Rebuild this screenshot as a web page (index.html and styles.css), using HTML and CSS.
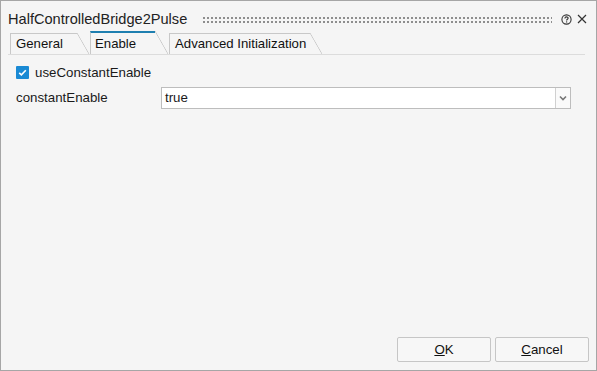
FILE: index.html
```html
<!DOCTYPE html>
<html>
<head>
<meta charset="utf-8">
<link rel="stylesheet" href="styles.css">
</head>
<body>
<div class="window">
  <div class="titlebar">
    <span class="title">HalfControlledBridge2Pulse</span>
    <span class="grip"></span>
    <span class="help">
      <svg width="11" height="11" viewBox="0 0 11 11"><circle cx="5.5" cy="5.5" r="4.6" fill="none" stroke="#333" stroke-width="1.1"/><path d="M3.9 4.4 C3.9 3.4 4.6 2.9 5.5 2.9 C6.4 2.9 7.1 3.4 7.1 4.2 C7.1 5.2 5.6 5.3 5.6 6.4" fill="none" stroke="#333" stroke-width="1.1"/><circle cx="5.6" cy="7.9" r="0.7" fill="#333"/></svg>
    </span>
    <span class="close">
      <svg width="10" height="10" viewBox="0 0 10 10"><path d="M1 1 L9 9 M9 1 L1 9" stroke="#333" stroke-width="1.2"/></svg>
    </span>
  </div>
  <div class="tabs">
    <div class="tab tab-general">General</div>
    <div class="tab tab-enable selected">Enable</div>
    <div class="tab tab-adv">Advanced Initialization</div>
  </div>
  <div class="content">
    <div class="row check-row">
      <span class="checkbox">
        <svg width="13" height="13" viewBox="0 0 13 13"><rect width="13" height="13" rx="1" fill="#1a8ad4"/><path d="M3.2 6.8 L5.4 8.9 L9.8 4.3" fill="none" stroke="#fff" stroke-width="1.6"/></svg>
      </span>
      <span class="label">useConstantEnable</span>
    </div>
    <div class="row field-row">
      <span class="field-label">constantEnable</span>
      <div class="combo">
        <span class="combo-value">true</span>
        <span class="combo-btn">
          <svg width="8" height="6" viewBox="0 0 8 6"><path d="M1 1.5 L4 4.5 L7 1.5" fill="none" stroke="#777" stroke-width="1.6"/></svg>
        </span>
      </div>
    </div>
  </div>
  <div class="footer">
    <button class="btn"><u>O</u>K</button>
    <button class="btn"><u>C</u>ancel</button>
  </div>
</div>
</body>
</html>
```

FILE: styles.css
```css
html, body {
  margin: 0;
  padding: 0;
  background: #f5f5f5;
}
.window {
  width: 597px;
  height: 371px;
  box-sizing: border-box;
  border: 1px solid #a6a6a6;
  background: #f5f5f5;
  display: flex;
  flex-direction: column;
  font-family: "Liberation Sans", Arial, sans-serif;
  color: #1a1a1a;
}
.titlebar {
  display: flex;
  align-items: center;
  height: 30px;
  padding: 0 0 0 7px;
  box-sizing: border-box;
}
.title {
  font-size: 14.6px;
  color: #222;
  padding-top: 6px;
}
.grip {
  flex: 1;
  height: 7px;
  margin: 6px 9px 0 15px;
  background-image: radial-gradient(circle, #8e8e8e 0.9px, transparent 1.2px);
  background-size: 4px 4px;
  background-position: 0 0;
}
.help {
  display: flex;
  margin-top: 6px;
  margin-right: 5px;
}
.close {
  display: flex;
  margin-top: 6px;
  margin-right: 9px;
}
.tabs {
  display: flex;
  align-items: flex-end;
  height: 24px;
  margin: 0 11px 0 7px;
  border-bottom: 1px solid #dcdcdc;
  box-sizing: border-box;
}
.tab {
  position: relative;
  height: 21px;
  box-sizing: border-box;
  border-left: 1px solid #c8c8c8;
  border-top: 1px solid #c8c8c8;
  font-size: 13.2px;
  line-height: 20px;
  padding: 0 0 0 5px;
  color: #111;
}
.tab::after {
  content: "";
  position: absolute;
  top: -1px;
  right: -12px;
  width: 12px;
  height: 21px;
  background: linear-gradient(to top right, transparent calc(50% - 0.7px), #c8c8c8 50%, transparent calc(50% + 0.7px));
}
.tab-general {
  width: 67px;
  margin-left: 2px;
}
.tab-enable {
  width: 65px;
  margin-left: 13px;
  height: 23px;
  line-height: 22px;
  border-top: 2px solid #1e7fb0;
  padding-left: 4px;
}
.tab-enable::after {
  top: -2px;
  height: 23px;
  right: -13px;
  width: 13px;
}
.tab-adv {
  width: 141px;
  margin-left: 14px;
}
.content {
  flex: 1;
  padding: 9px 0 0 15px;
}
.row {
  display: flex;
  align-items: center;
}
.check-row {
  height: 16px;
}
.checkbox {
  display: flex;
  width: 13px;
  height: 13px;
}
.label {
  font-size: 13.3px;
  margin-left: 6px;
}
.field-row {
  margin-top: 7px;
}
.field-label {
  font-size: 13.3px;
  width: 145px;
  margin-top: -1px;
}
.combo {
  display: flex;
  width: 410px;
  height: 22px;
  box-sizing: border-box;
  border: 1px solid #bdbdbd;
  background: #fff;
}
.combo-value {
  flex: 1;
  font-size: 13.3px;
  line-height: 20px;
  padding-left: 3px;
}
.combo-btn {
  width: 14px;
  border-left: 1px solid #d0d0d0;
  display: flex;
  align-items: center;
  justify-content: center;
  background: #fafafa;
}
.footer {
  display: flex;
  justify-content: flex-end;
  gap: 4px;
  padding: 0 7px 8px 0;
}
.btn {
  width: 94px;
  height: 25px;
  border: 1px solid #c6c6c6;
  border-radius: 2px;
  background: #f7f7f7;
  font-family: "Liberation Sans", Arial, sans-serif;
  font-size: 13.3px;
  color: #111;
  padding: 0;
}
```
